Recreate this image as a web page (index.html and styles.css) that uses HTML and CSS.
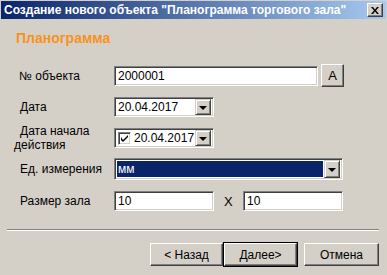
FILE: index.html
```html
<!DOCTYPE html>
<html lang="ru">
<head>
<meta charset="utf-8">
<title>Планограмма</title>
<link rel="stylesheet" href="styles.css">
</head>
<body>
<div class="window">
  <div class="titlebar">
    <span class="title">Создание нового объекта "Планограмма торгового зала"</span>
    <span class="close"><svg width="8" height="7" viewBox="0 0 8 7"><path d="M0 0h2l2 2.5L6 0h2L5 3.5 8 7H6L4 4.5 2 7H0l3-3.5z" fill="#000"/></svg></span>
  </div>
  <div class="heading">Планограмма</div>
  <div class="form">
    <div class="row r1">
      <div class="label">№ объекта</div>
      <div class="field w204"><span class="val">2000001</span></div>
      <div class="btn abtn">A</div>
    </div>
    <div class="row r2">
      <div class="label">Дата</div>
      <div class="field combo w100"><span class="val">20.04.2017</span><span class="drop"><i class="tri"></i></span></div>
    </div>
    <div class="row r3">
      <div class="label two"><span class="l1">Дата начала</span><span class="l2">действия</span></div>
      <div class="field combo w100"><span class="chk"><svg width="7" height="7" viewBox="0 0 7 7"><path d="M0 2v3l2 2 5-5V0L2 5z" fill="#000"/></svg></span><span class="val">20.04.2017</span><span class="drop"><i class="tri"></i></span></div>
    </div>
    <div class="row r4">
      <div class="label">Ед. измерения</div>
      <div class="field combo sel w229"><span class="val selval">мм</span><span class="drop"><i class="tri"></i></span></div>
    </div>
    <div class="row r5">
      <div class="label">Размер зала</div>
      <div class="field w100"><span class="val">10</span></div>
      <div class="xlabel">X</div>
      <div class="field w100"><span class="val">10</span></div>
    </div>
  </div>
  <div class="sep"></div>
  <div class="buttons">
    <div class="btn pb b73">&lt; Назад</div>
    <div class="btn pb b73 def">Далее&gt;</div>
    <div class="btn pb b75">Отмена</div>
  </div>
</div>
</body>
</html>
```

FILE: styles.css
```css
html, body { margin: 0; padding: 0; }
body {
  width: 387px; height: 275px; overflow: hidden;
  background: #d4d0c8;
  font-family: "Liberation Sans", Arial, sans-serif;
  font-size: 12px; color: #000;
}
.window { width: 387px; height: 275px; background: #d4d0c8; padding-top: 1px; box-sizing: border-box; }
.titlebar {
  margin: 0 1px; height: 18px;
  background: linear-gradient(to right, #0a246a, #a6caf0);
  display: flex; align-items: center; justify-content: space-between;
  padding-left: 3px; padding-right: 3px;
}
.title { color: #fff; font-weight: bold; font-size: 12px; white-space: nowrap; letter-spacing: 0; }
.close {
  width: 14px; height: 12px; background: #d4d0c8;
  border: 1px solid; border-color: #fff #404040 #404040 #fff;
  box-shadow: inset -1px -1px #808080;
  display: flex; align-items: center; justify-content: center;
}
.heading {
  margin: 11px 0 0 16px; height: 16px; line-height: 16px;
  font-weight: bold; font-size: 14px; color: #f8921e;
}
.form { margin-top: 18px; }
.row { display: flex; align-items: center; }
.r1 { height: 23px; }
.r2 { height: 20px; margin-top: 10px; }
.r3 { height: 20px; margin-top: 11px; }
.r4 { height: 22px; margin-top: 10px; }
.r5 { height: 20px; margin-top: 11px; }
.label { width: 114px; box-sizing: border-box; padding-left: 20px; white-space: nowrap; flex: none; }
.r1 .label { padding-left: 19px; }
.label.two { display: flex; flex-direction: column; padding-left: 0; line-height: 14px; margin-top: -1px; }
.two .l1 { padding-left: 20px; }
.two .l2 { padding-left: 14px; }
.field {
  box-sizing: border-box; height: 20px; background: #fff; flex: none;
  border: 1px solid; border-color: #808080 #fff #fff #808080;
  box-shadow: inset 1px 1px #404040, inset -1px -1px #d4d0c8;
  display: flex; align-items: center; padding: 2px;
}
.w204 { width: 204px; }
.w100 { width: 100px; }
.w229 { width: 229px; height: 22px; }
.val { padding-left: 1px; line-height: 14px; white-space: nowrap; }
.combo .val { flex: 1; overflow: hidden; }
.drop {
  box-sizing: border-box; width: 16px; height: 16px; background: #d4d0c8; flex: none;
  border: 1px solid; border-color: #d4d0c8 #404040 #404040 #d4d0c8;
  box-shadow: inset 1px 1px #fff, inset -1px -1px #808080;
  display: flex; align-items: center; justify-content: center;
}
.sel .drop { height: 18px; }
.tri { width: 0; height: 0; border-left: 4px solid transparent; border-right: 4px solid transparent; border-top: 4px solid #000; margin-top: 1px; }
.sel .val.selval { background: #0a246a; color: #fff; align-self: stretch; display: flex; align-items: center; margin-right: 1px; }
.chk {
  box-sizing: border-box; width: 13px; height: 13px; background: #fff; margin-left: 1px; margin-right: 2px; flex: none;
  border: 1px solid; border-color: #808080 #fff #fff #808080;
  box-shadow: inset 1px 1px #404040, inset -1px -1px #d4d0c8;
  display: flex; align-items: center; justify-content: center;
}
.btn {
  box-sizing: border-box; background: #d4d0c8; flex: none;
  border: 1px solid; border-color: #fff #404040 #404040 #fff;
  box-shadow: inset -1px -1px #808080;
  display: flex; align-items: center; justify-content: center;
}
.abtn { width: 23px; height: 23px; margin-left: 3px; font-size: 13px; }
.xlabel { width: 29px; padding-left: 10px; box-sizing: border-box; font-size: 13px; flex: none; }
.sep { margin: 18px 8px 0 7px; height: 0; border-top: 1px solid #808080; border-bottom: 1px solid #fff; }
.buttons { display: flex; margin-top: 12px; padding-left: 150px; }
.pb { height: 23px; }
.b73 { width: 73px; margin-right: 1px; }
.b75 { width: 75px; margin-left: 6px; }
.def { box-shadow: inset -1px -1px #808080, 0 0 0 1px #000; }
```
